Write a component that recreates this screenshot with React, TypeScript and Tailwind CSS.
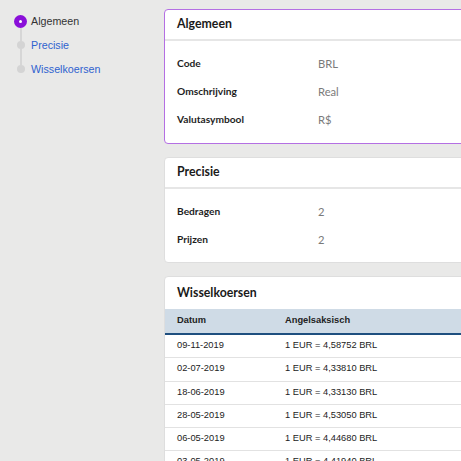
import React from "react";

const steps = [
  { label: "Algemeen", active: true },
  { label: "Precisie", active: false },
  { label: "Wisselkoersen", active: false },
];

const rates = [
  ["09-11-2019", "1 EUR = 4,58752 BRL"],
  ["02-07-2019", "1 EUR = 4,33810 BRL"],
  ["18-06-2019", "1 EUR = 4,33130 BRL"],
  ["28-05-2019", "1 EUR = 4,53050 BRL"],
  ["06-05-2019", "1 EUR = 4,44680 BRL"],
  ["03-05-2019", "1 EUR = 4,41940 BRL"],
];

function Row({ label, value }: { label: string; value: string }) {
  return (
    <div className="flex items-center h-[28px] px-[12px]">
      <div className="w-[141px] text-[10.2px] font-bold text-[#1e1e1e] font-['Lato',sans-serif]">{label}</div>
      <div className="text-[11.2px] text-[#7a7a7a] font-['Lato',sans-serif]">{value}</div>
    </div>
  );
}

export default function App() {
  return (
    <div className="w-[461px] h-[461px] overflow-hidden bg-[#e9e9e8] flex">
      <div className="w-[164px] shrink-0 pt-[9px] pl-[14px] flex flex-col">
        {steps.map((s, i) => (
          <div key={s.label} className="flex h-[24px] items-stretch gap-[4px]">
            <div className="w-[13px] flex flex-col items-center">
              <div className={`flex-1 w-[2px] ${i === 0 ? "bg-transparent" : "bg-[#d6d6d6]"}`} />
              {s.active ? (
                <div className="w-[13px] h-[13px] rounded-full bg-[#8a0fd9] flex items-center justify-center">
                  <div className="w-[3px] h-[3px] rounded-full bg-white" />
                </div>
              ) : (
                <div className="w-[8px] h-[8px] rounded-full bg-[#d4d4d4]" />
              )}
              <div className={`flex-1 w-[2px] ${i === steps.length - 1 ? "bg-transparent" : "bg-[#d6d6d6]"}`} />
            </div>
            <div
              className={`flex items-center text-[10.7px] font-['Liberation_Sans',Arial,sans-serif] ${
                s.active ? "text-[#333333]" : "text-[#2f62cf]"
              }`}
            >
              {s.label}
            </div>
          </div>
        ))}
      </div>

      <div className="flex flex-col gap-[13px] pt-[9px] w-[340px] shrink-0">
        <div className="bg-white border border-[#b46fe3] rounded-[4px]">
          <div className="h-[31px] flex items-center px-[12px] border-b-2 border-[#e6e6e6] text-[12.3px] font-bold text-[#1a1a1a] font-['Lato',sans-serif]">
            Algemeen
          </div>
          <div className="pt-[9px] pb-[9px]">
            <Row label="Code" value="BRL" />
            <Row label="Omschrijving" value="Real" />
            <Row label="Valutasymbool" value="R$" />
          </div>
        </div>

        <div className="bg-white border border-[#dedede] rounded-[4px]">
          <div className="h-[31px] flex items-center px-[12px] border-b-2 border-[#e6e6e6] text-[12.3px] font-bold text-[#1a1a1a] font-['Lato',sans-serif]">
            Precisie
          </div>
          <div className="pt-[9px] pb-[8px]">
            <Row label="Bedragen" value="2" />
            <Row label="Prijzen" value="2" />
          </div>
        </div>

        <div className="bg-white border border-[#dedede] rounded-[4px]">
          <div className="h-[32px] flex items-center px-[12px] text-[12.3px] font-bold text-[#1a1a1a] font-['Lato',sans-serif]">
            Wisselkoersen
          </div>
          <div className="font-['Liberation_Sans',Arial,sans-serif] text-[9.3px] text-[#222222]">
            <div className="flex items-center h-[26px] bg-[#cfdbe6] border-b-2 border-[#1f4f7f] font-bold px-[12px]">
              <div className="w-[108px]">Datum</div>
              <div>Angelsaksisch</div>
            </div>
            {rates.map(([d, r]) => (
              <div key={d} className="flex items-center h-[23.25px] border-b border-[#e2e2e2] px-[12px]">
                <div className="w-[108px]">{d}</div>
                <div>{r}</div>
              </div>
            ))}
          </div>
        </div>
      </div>
    </div>
  );
}
